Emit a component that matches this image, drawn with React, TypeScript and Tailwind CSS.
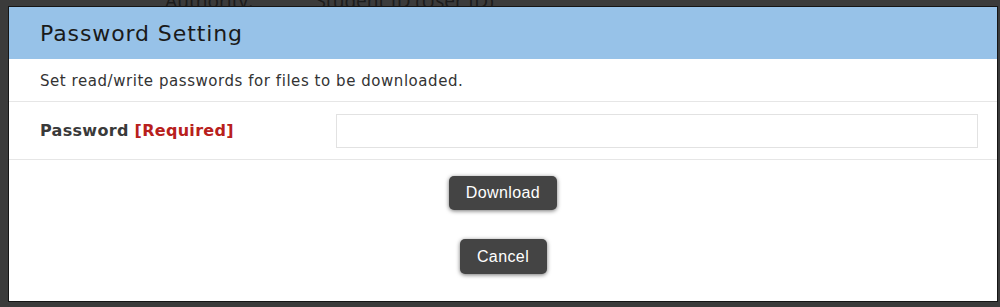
import React, { useState } from 'react';

const font = { fontFamily: '"DejaVu Sans", "Noto Sans", sans-serif' };
const bgFont = { fontFamily: '"Noto Sans", "Liberation Sans", sans-serif' };
const btnFont = { fontFamily: '"Liberation Sans", Arial, sans-serif' };

const App: React.FC = () => {
  const [password, setPassword] = useState('');

  return (
    <div className="relative w-[1000px] h-[307px] overflow-hidden bg-[#3b3b3b]" style={font}>
      {/* page behind the overlay */}
      <div className="absolute left-[165px] -top-[13px] flex gap-[62px] text-[19px] text-[#1c1c1c]" style={bgFont}>
        <span>Authority:</span>
        <span>Student ID (User ID)</span>
      </div>

      <div className="relative ml-[8px] mt-[6px] w-[990px] h-[296px] border border-[#151515] bg-white flex flex-col">
        <div className="h-[52px] bg-[#97c2e8] flex items-center pl-[31px]">
          <h2 className="text-[22px] tracking-[0.9px] text-[#1a1a1a]">Password Setting</h2>
        </div>

        <div className="h-[43px] flex items-center pl-[31px] pt-[3px] border-b border-[#e6e6e6]">
          <p className="text-[15px] tracking-[0.55px] text-[#333]">Set read/write passwords for files to be downloaded.</p>
        </div>

        <div className="h-[58px] flex items-center pl-[31px] pr-[19px] border-b border-[#e6e6e6]">
          <label className="w-[296px] text-[16px] font-bold tracking-[0.3px] text-[#3a3a3a]">
            Password <span className="text-[#b8201c]">[Required]</span>
          </label>
          <input
            type="password"
            value={password}
            onChange={e => setPassword(e.target.value)}
            className="flex-1 h-[34px] border border-[#e2e2e2] bg-white px-2 outline-none"
          />
        </div>

        <div className="flex flex-col items-center pt-[16px] gap-[29px]" style={btnFont}>
          <button className="w-[108px] h-[34px] rounded-[5px] bg-[#444] text-white text-[16px] tracking-[0.4px] shadow-[0_1px_4px_rgba(0,0,0,0.55)]">
            Download
          </button>
          <button className="w-[87px] h-[35px] rounded-[5px] bg-[#444] text-white text-[16px] tracking-[0.4px] shadow-[0_1px_4px_rgba(0,0,0,0.55)]">
            Cancel
          </button>
        </div>
      </div>
    </div>
  );
};

export default App;
